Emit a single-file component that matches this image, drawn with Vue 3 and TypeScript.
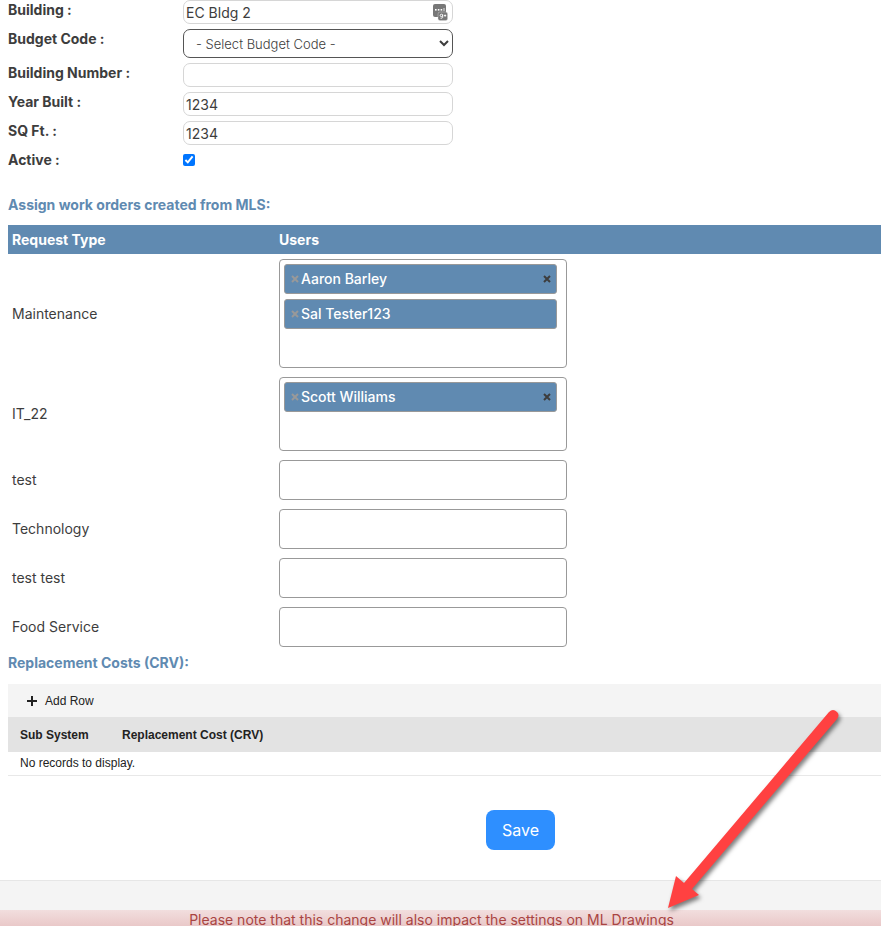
<script setup lang="ts">
import { ref } from 'vue'

interface RequestType {
  name: string
  users: string[]
  clearable: boolean
}

const building = ref('EC Bldg 2')
const budgetCode = ref('')
const buildingNumber = ref('')
const yearBuilt = ref('1234')
const squareFeet = ref('1234')
const active = ref(true)

const requestTypes = ref<RequestType[]>([
  { name: 'Maintenance', users: ['Aaron Barley', 'Sal Tester123'], clearable: true },
  { name: 'IT_22', users: ['Scott Williams'], clearable: true },
  { name: 'test', users: [], clearable: false },
  { name: 'Technology', users: [], clearable: false },
  { name: 'test test', users: [], clearable: false },
  { name: 'Food Service', users: [], clearable: false },
])

function removeUser(type: RequestType, user: string) {
  type.users = type.users.filter((u) => u !== user)
}

function clearUsers(type: RequestType) {
  type.users = []
}
</script>

<template>
  <main class="page">
    <form class="content" @submit.prevent>
      <div class="fields">
        <div class="field">
          <label for="building">Building :</label>
          <div class="control">
            <input id="building" v-model="building" class="text" type="text" />
            <svg class="badge" viewBox="0 0 15 17" aria-hidden="true">
              <rect x="0" y="0" width="13" height="13" rx="2" fill="#777" />
              <g fill="#fff">
                <rect x="2" y="5" width="1.6" height="1.6" />
                <rect x="4.8" y="5" width="1.6" height="1.6" />
                <rect x="7.6" y="5" width="1.6" height="1.6" />
                <rect x="10.6" y="4" width="0.8" height="3" />
              </g>
              <rect x="5" y="8" width="9.6" height="8.6" rx="2" fill="#777" stroke="#ddd" stroke-width="0.4" />
              <g fill="none" stroke="#fff" stroke-width="0.9">
                <circle cx="8.4" cy="11.4" r="1.2" />
                <path d="M9.7 10.4v3q0 1-2.2.8M11 11.6h2.2M12.1 10.5v2.2" />
              </g>
            </svg>
          </div>
        </div>
        <div class="field">
          <label for="budget">Budget Code :</label>
          <div class="control">
            <select id="budget" v-model="budgetCode" class="select">
              <option value="">- Select Budget Code -</option>
            </select>
          </div>
        </div>
        <div class="field">
          <label for="number">Building Number :</label>
          <div class="control"><input id="number" v-model="buildingNumber" class="text" type="text" /></div>
        </div>
        <div class="field">
          <label for="year">Year Built :</label>
          <div class="control"><input id="year" v-model="yearBuilt" class="text" type="text" /></div>
        </div>
        <div class="field">
          <label for="sqft">SQ Ft. :</label>
          <div class="control"><input id="sqft" v-model="squareFeet" class="text" type="text" /></div>
        </div>
        <div class="field">
          <label for="active">Active :</label>
          <div class="control"><input id="active" v-model="active" class="check" type="checkbox" /></div>
        </div>
      </div>

      <h2 class="heading">Assign work orders created from MLS:</h2>
      <table class="assign">
        <thead>
          <tr>
            <th class="type" scope="col">Request Type</th>
            <th scope="col">Users</th>
          </tr>
        </thead>
        <tbody>
          <tr v-for="(type, i) in requestTypes" :key="type.name">
            <td><label :for="`users-${i}`">{{ type.name }}</label></td>
            <td>
              <div class="picker">
                <div v-for="(user, n) in type.users" :key="user" class="tag">
                  <button class="remove" type="button" :aria-label="`Remove ${user}`" @click="removeUser(type, user)">
                    <svg viewBox="0 0 8 8"><path d="M1 1l6 6M7 1L1 7" /></svg>
                  </button>
                  <span class="name">{{ user }}</span>
                  <button
                    v-if="n === 0 && type.clearable"
                    class="remove clear"
                    type="button"
                    aria-label="Remove all"
                    @click="clearUsers(type)"
                  >
                    <svg viewBox="0 0 8 8"><path d="M1 1l6 6M7 1L1 7" /></svg>
                  </button>
                </div>
                <input :id="`users-${i}`" class="search" type="text" />
              </div>
            </td>
          </tr>
        </tbody>
      </table>

      <h2 class="heading">Replacement Costs (CRV):</h2>
      <div class="grid">
        <div class="toolbar">
          <button class="add" type="button">
            <svg viewBox="0 0 10 10" aria-hidden="true"><path d="M5 0v10M0 5h10" /></svg>
            Add Row
          </button>
        </div>
        <table class="costs">
          <thead>
            <tr>
              <th class="system" scope="col">Sub System</th>
              <th scope="col">Replacement Cost (CRV)</th>
            </tr>
          </thead>
          <tbody>
            <tr>
              <td colspan="2">No records to display.</td>
            </tr>
          </tbody>
        </table>
      </div>

      <div class="actions"><button class="save" type="submit">Save</button></div>
    </form>

    <footer class="footer">
      <p class="notice">Please note that this change will also impact the settings on ML Drawings</p>
    </footer>

    <svg class="arrow" viewBox="0 0 190 220" aria-hidden="true">
      <path
        d="M8 203L16 171L24 178L169 7Q173 3 177 7Q180 10 177 14L32 184L39 190Z"
        fill="#ff4141"
      />
    </svg>
  </main>
</template>

<style>
body {
  background: #fff;
  overflow: hidden;
}
</style>

<style scoped>
.page {
  position: relative;
  font-family: Inter, "Liberation Sans", sans-serif;
  font-size: 14px;
  line-height: 20px;
  color: #3d3d3d;
}

.page * {
  box-sizing: border-box;
}

.content {
  padding-left: 8px;
}

.fields {
  display: flex;
  flex-direction: column;
  gap: 5px;
}

.field {
  display: grid;
  grid-template-columns: 175px 270px;
  align-items: start;
}

.field label {
  font-weight: 700;
}

.control {
  display: flex;
  position: relative;
}

.text {
  width: 100%;
  height: 24px;
  padding: 0 2px;
  border: 1px solid #d6d6d6;
  border-radius: 7px;
  background: #fff;
  font: inherit;
  color: #3d3d3d;
}

.badge {
  position: absolute;
  top: 4px;
  right: 5px;
  width: 15px;
  height: 17px;
}

.select {
  width: 100%;
  height: 29px;
  padding: 0 8px;
  border: 1px solid #555;
  border-radius: 7px;
  background: #fff;
  font: inherit;
  font-size: 13px;
  font-weight: 300;
  color: #3d3d3d;
}

.check {
  width: 12px;
  height: 12px;
  margin: 4px 0;
}

.heading {
  margin: 0;
  font-size: 14px;
  line-height: 24px;
  font-weight: 700;
  color: #608ab1;
}

.fields + .heading {
  margin-top: 23px;
}

.assign {
  width: 100%;
  margin-top: 8px;
  border-collapse: collapse;
  table-layout: fixed;
}

.assign th {
  height: 29px;
  padding: 0 4px;
  background: #608ab1;
  color: #fff;
  font-weight: 700;
  text-align: left;
}

.assign .type {
  width: 267px;
}

.assign td {
  padding: 5px 4px 4px;
}

.picker {
  display: flex;
  flex-direction: column;
  gap: 5px;
  width: 288px;
  min-height: 40px;
  padding: 4px 9px 4px 4px;
  border: 1px solid #999;
  border-radius: 4px;
}

.tag {
  display: flex;
  align-items: center;
  gap: 2px;
  height: 30px;
  padding: 0 5px 0 6px;
  border: 1px solid #999;
  border-radius: 3px;
  background: #608ab1;
  color: #fff;
  font-weight: 500;
}

.name {
  flex: 1;
}

.remove {
  display: flex;
  padding: 0;
  border: 0;
  background: none;
}

.remove svg {
  width: 8px;
  height: 8px;
  fill: none;
  stroke: #999;
  stroke-width: 2;
}

.clear svg {
  stroke: #3d3d3d;
}

.search {
  height: 29px;
  padding: 0 4px;
  border: 0;
  outline: 0;
  background: none;
  font: inherit;
}

.grid {
  margin-top: 9px;
  font-family: "Liberation Sans", Arial, sans-serif;
  font-size: 12px;
  color: #222;
}

.toolbar {
  display: flex;
  height: 33px;
  padding-left: 19px;
  background: #f4f4f4;
}

.add {
  display: flex;
  align-items: center;
  gap: 8px;
  padding: 0;
  border: 0;
  background: none;
  font: inherit;
  color: inherit;
}

.add svg {
  width: 10px;
  height: 10px;
  fill: none;
  stroke: #222;
  stroke-width: 2;
}

.costs {
  width: 100%;
  border-collapse: collapse;
  table-layout: fixed;
}

.costs th {
  height: 35px;
  padding: 0 12px;
  background: #e3e3e3;
  font-weight: 700;
  text-align: left;
}

.costs .system {
  width: 102px;
}

.costs td {
  height: 23px;
  padding: 0 12px;
  border-bottom: 1px solid #e8e8e8;
}

.actions {
  display: flex;
  justify-content: center;
  padding: 34px 0 30px 152px;
}

.save {
  height: 40px;
  padding: 0 16px;
  border: 0;
  border-radius: 8px;
  background: #2e8fff;
  color: #fff;
  font: inherit;
  font-size: 16px;
}

.footer {
  padding-top: 29px;
  border-top: 1px solid #e6e6e6;
  background: #f4f4f4;
}

.notice {
  margin: 0;
  padding-right: 18px;
  background: linear-gradient(#f2dede, #e7c3c3);
  color: #a94442;
  text-align: center;
}

.arrow {
  position: absolute;
  top: 705px;
  left: 660px;
  width: 190px;
  height: 220px;
  pointer-events: none;
  filter: drop-shadow(2px 3px 2px rgba(0, 0, 0, 0.5));
}
</style>
